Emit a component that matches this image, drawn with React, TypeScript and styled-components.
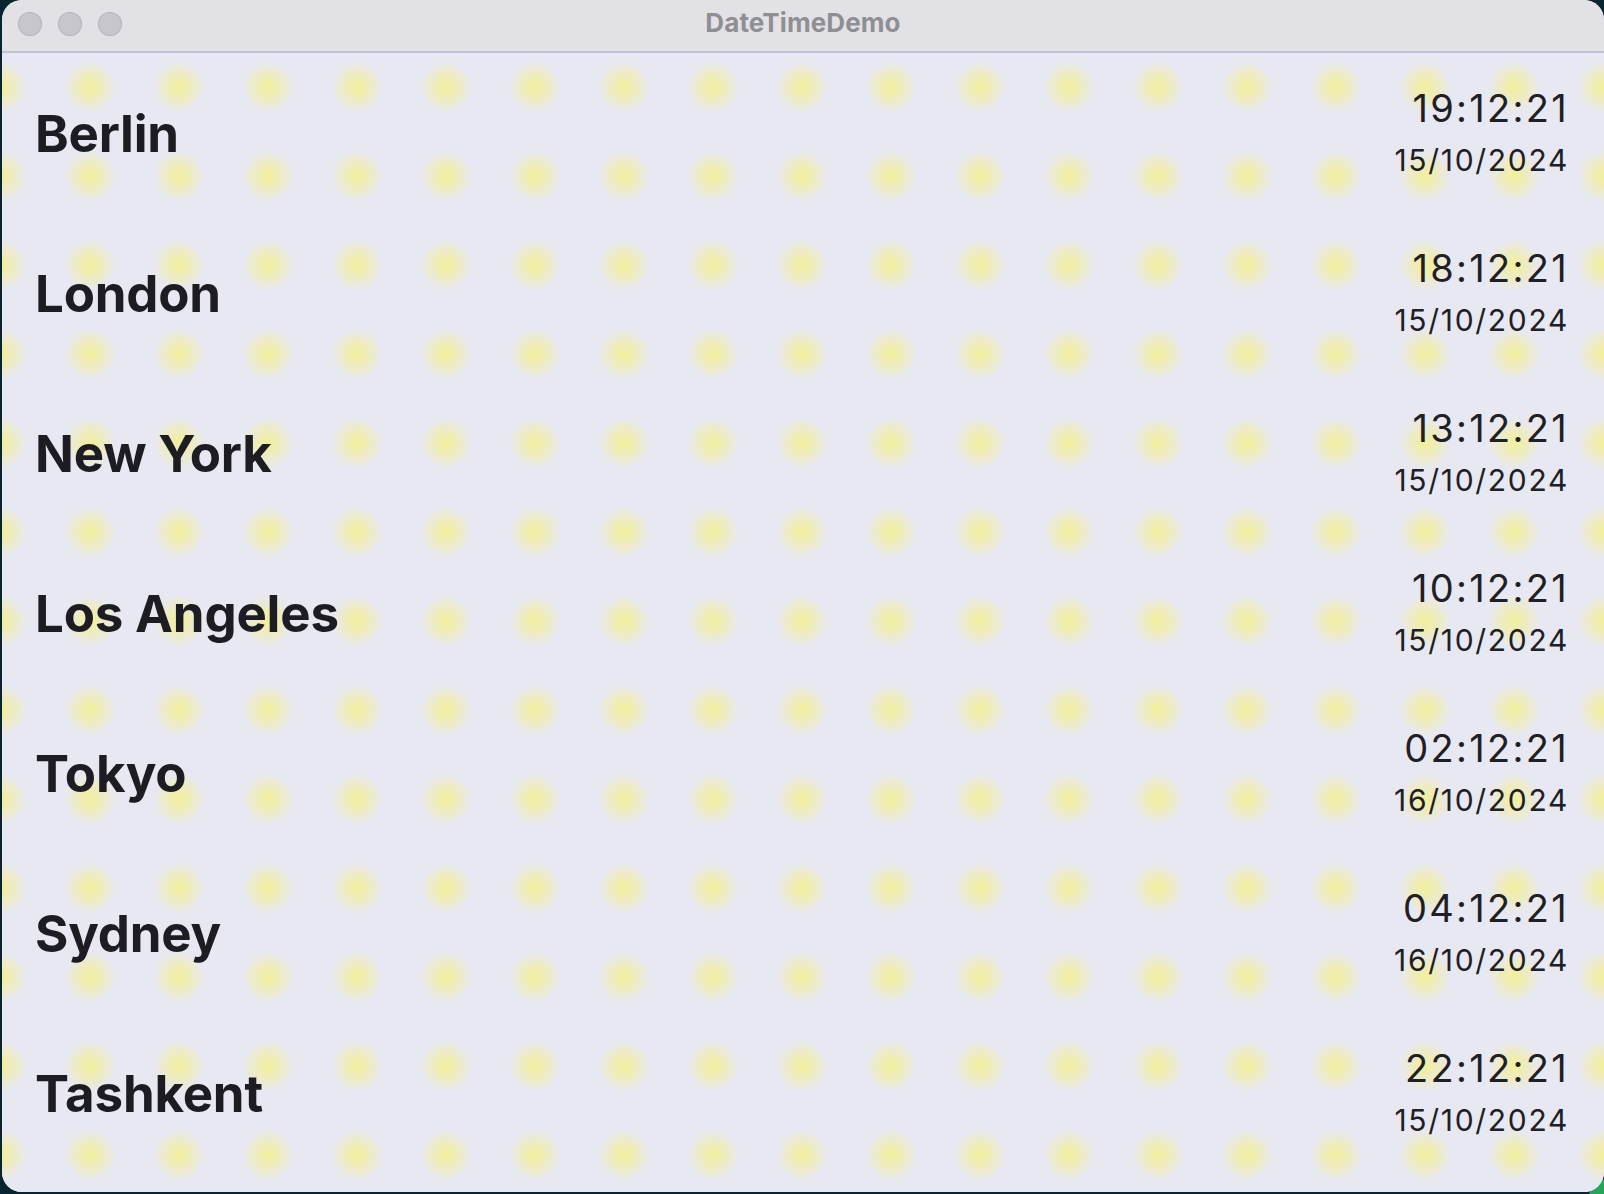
import React from 'react';
import styled, { createGlobalStyle } from 'styled-components';

const GlobalStyle = createGlobalStyle`
  html, body {
    margin: 0;
    padding: 0;
  }
  body {
    width: 1604px;
    height: 1194px;
    overflow: hidden;
    background:
      radial-gradient(circle at 100% 100%, #27a55a 0, #27a55a 14px, transparent 15px),
      #0b2530;
    font-family: Inter, "Noto Sans", "Liberation Sans", sans-serif;
  }
`;

const Window = styled.div`
  margin-left: 2px;
  width: 1602px;
  height: 1192px;
  border-radius: 20px;
  overflow: hidden;
  display: flex;
  flex-direction: column;
  background: #e9e9f1;
`;

const TitleBar = styled.div`
  height: 51px;
  flex-shrink: 0;
  display: grid;
  grid-template-columns: 1fr auto 1fr;
  align-items: center;
  background: #e2e2e6;
  border-bottom: 2px solid #bfc2d8;
`;

const Lights = styled.div`
  display: flex;
  gap: 16px;
  padding-left: 16px;
  padding-bottom: 4px;
`;

const Light = styled.span`
  width: 24px;
  height: 24px;
  border-radius: 50%;
  background: #c6c6cc;
  box-shadow: inset 0 0 0 1px #b6b6be;
`;

const Title = styled.div`
  font-size: 26px;
  font-weight: 700;
  color: #8f8f93;
  padding-bottom: 6px;
  letter-spacing: 0.1px;
`;

const List = styled.div`
  flex: 1;
  background-color: #e8e8f3;
  background-image: radial-gradient(
    circle at center,
    rgba(244, 240, 140, 0.85) 0,
    rgba(244, 240, 140, 0.55) 11px,
    rgba(244, 240, 140, 0) 26px
  );
  background-size: 89px 89px;
  background-position: 43.5px -10.5px;
`;

const Row = styled.div`
  height: 160px;
  display: flex;
  align-items: center;
  justify-content: space-between;
  padding: 0 35px 0 33px;
`;

const City = styled.div`
  font-size: 51px;
  line-height: 1;
  font-weight: 700;
  color: #1c1c22;
  letter-spacing: -0.2px;
`;

const Clock = styled.div`
  display: flex;
  flex-direction: column;
  align-items: flex-end;
  color: #202024;
  padding-top: 4px;
`;

const Time = styled.div`
  font-size: 38px;
  line-height: 48px;
  letter-spacing: 2.3px;
`;

const DateText = styled.div`
  font-size: 30px;
  line-height: 52px;
  letter-spacing: 1.7px;
  padding-top: 2px;
`;

const cities = [
  { name: 'Berlin', time: '19:12:21', date: '15/10/2024' },
  { name: 'London', time: '18:12:21', date: '15/10/2024' },
  { name: 'New York', time: '13:12:21', date: '15/10/2024' },
  { name: 'Los Angeles', time: '10:12:21', date: '15/10/2024' },
  { name: 'Tokyo', time: '02:12:21', date: '16/10/2024' },
  { name: 'Sydney', time: '04:12:21', date: '16/10/2024' },
  { name: 'Tashkent', time: '22:12:21', date: '15/10/2024' },
];

const App: React.FC = () => {
  return (
    <>
      <GlobalStyle />
      <Window>
        <TitleBar>
          <Lights>
            <Light />
            <Light />
            <Light />
          </Lights>
          <Title>DateTimeDemo</Title>
          <div />
        </TitleBar>
        <List>
          {cities.map((c) => (
            <Row key={c.name}>
              <City>{c.name}</City>
              <Clock>
                <Time>{c.time}</Time>
                <DateText>{c.date}</DateText>
              </Clock>
            </Row>
          ))}
        </List>
      </Window>
    </>
  );
};

export default App;
